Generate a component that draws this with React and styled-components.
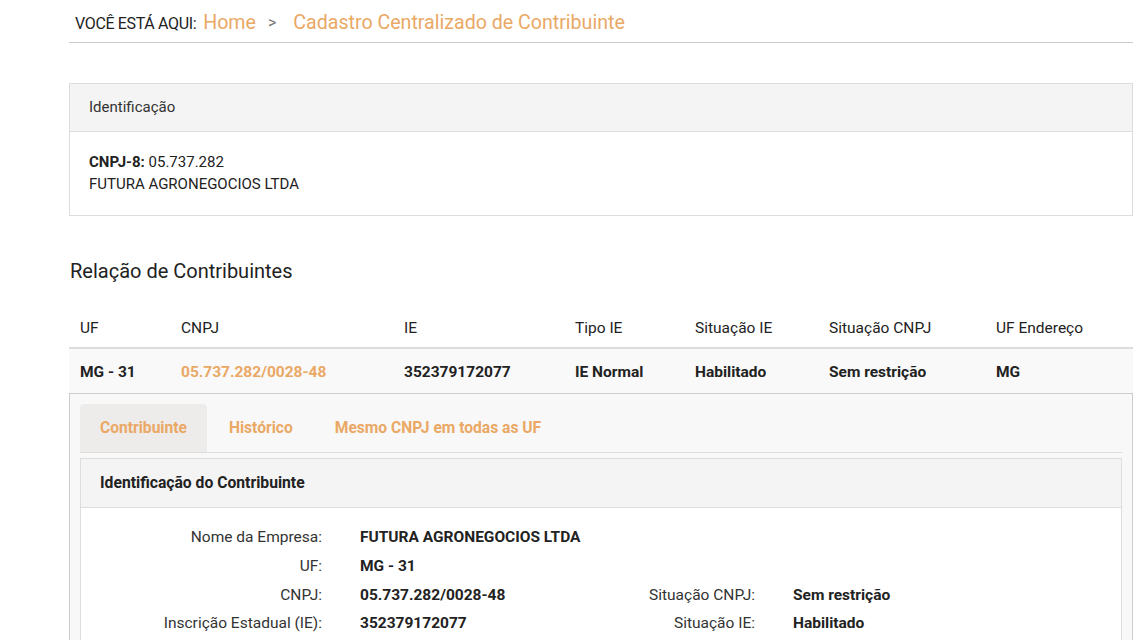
import React from "react";
import styled, { createGlobalStyle } from "styled-components";

const Global = createGlobalStyle`
  html, body { margin: 0; padding: 0; background: #fff; }
  body { font-family: Roboto, "Liberation Sans", Arial, sans-serif; color: #333; font-size: 15px; }
  * { box-sizing: border-box; }
`;

const ORANGE = "#eaa865";

const Page = styled.div`
  width: 1064px;
  margin-left: 69px;
`;

const Breadcrumb = styled.nav`
  height: 43px;
  border-bottom: 1px solid #cccccc;
  display: flex;
  align-items: center;
  padding-left: 6px;
  padding-top: 3px;
  gap: 7px;
`;

const Here = styled.span`
  font-size: 16px;
  letter-spacing: -0.35px;
  color: #222;
  margin-top: 1px;
`;

const Crumb = styled.span`
  font-size: 19.6px;
  color: ${ORANGE};
`;

const Sep = styled.span`
  font-size: 16px;
  color: #777;
  margin: 0 10px 0 5px;
`;

const Card = styled.section`
  margin-top: 40px;
  border: 1px solid #dddddd;
  background: #fff;
`;

const CardHeader = styled.div`
  height: 48px;
  line-height: 47px;
  padding: 0 19px;
  background: #f4f4f4;
  border-bottom: 1px solid #dddddd;
  font-size: 15px;
  color: #333;
`;

const CardBody = styled.div`
  padding: 19px 19px 20px;
  font-size: 15px;
  line-height: 22px;
  color: #222;
`;

const SectionTitle = styled.h2`
  margin: 41px 0 0 1px;
  font-size: 20px;
  font-weight: 400;
  line-height: 28px;
  color: #222;
`;

const Table = styled.div`
  margin-top: 20px;
`;

const Row = styled.div`
  display: grid;
  grid-template-columns: 101px 223px 171px 120px 134px 167px 1fr;
  align-items: center;
  height: 44px;
  padding-top: ${(p) => (p.$head ? "3px" : "1px")};
  background: ${(p) => (p.$head ? "#fff" : "#f9f9f9")};
  border-bottom: ${(p) => (p.$head ? "2px solid #dddddd" : "none")};
`;

const Cell = styled.div`
  padding-left: 11px;
  font-size: 15.5px;
  font-weight: ${(p) => (p.$bold ? 700 : 400)};
  color: ${(p) => (p.$link ? ORANGE : "#222")};
  white-space: nowrap;
`;

const Expanded = styled.div`
  border: 1px solid #cccccc;
  border-bottom: none;
  background: #f8f8f8;
  padding: 10px 10px 0;
`;

const Tabs = styled.div`
  display: flex;
  gap: 2px;
  border-bottom: 1px solid #dddddd;
  height: 49px;
`;

const Tab = styled.div`
  padding: 0 20px;
  height: 48px;
  line-height: 48px;
  font-size: 15.6px;
  font-weight: 700;
  color: ${ORANGE};
  background: ${(p) => (p.$active ? "#eeebeb" : "transparent")};
  border-radius: 4px 4px 0 0;
`;

const Panel = styled.div`
  margin-top: 5px;
  border: 1px solid #dddddd;
  border-bottom: none;
  background: #fff;
`;

const PanelHeader = styled.div`
  height: 49px;
  line-height: 48px;
  padding: 0 19px;
  background: #f4f4f4;
  border-bottom: 1px solid #dddddd;
  font-size: 15.7px;
  font-weight: 700;
  color: #222;
`;

const PanelBody = styled.div`
  padding: 15px 0 20px;
`;

const DetailRow = styled.div`
  display: grid;
  grid-template-columns: 279px 154px 279px 1fr;
  height: 28.7px;
  align-items: center;
  font-size: 15.5px;
`;

const Label = styled.div`
  text-align: right;
  padding-right: 38px;
  color: #333;
  white-space: nowrap;
`;

const Value = styled.div`
  font-weight: 700;
  color: #222;
  white-space: nowrap;
`;

const columns = ["UF", "CNPJ", "IE", "Tipo IE", "Situação IE", "Situação CNPJ", "UF Endereço"];

const details = [
  ["Nome da Empresa:", "FUTURA AGRONEGOCIOS LTDA", "", ""],
  ["UF:", "MG - 31", "", ""],
  ["CNPJ:", "05.737.282/0028-48", "Situação CNPJ:", "Sem restrição"],
  ["Inscrição Estadual (IE):", "352379172077", "Situação IE:", "Habilitado"],
];

export default function App() {
  return (
    <>
      <Global />
      <Page>
        <Breadcrumb>
          <Here>VOCÊ ESTÁ AQUI:</Here>
          <Crumb>Home</Crumb>
          <Sep>&gt;</Sep>
          <Crumb>Cadastro Centralizado de Contribuinte</Crumb>
        </Breadcrumb>

        <Card>
          <CardHeader>Identificação</CardHeader>
          <CardBody>
            <div>
              <b>CNPJ-8:</b> 05.737.282
            </div>
            <div>FUTURA AGRONEGOCIOS LTDA</div>
          </CardBody>
        </Card>

        <SectionTitle>Relação de Contribuintes</SectionTitle>

        <Table>
          <Row $head>
            {columns.map((c) => (
              <Cell key={c}>{c}</Cell>
            ))}
          </Row>
          <Row>
            <Cell $bold>MG - 31</Cell>
            <Cell $bold $link>05.737.282/0028-48</Cell>
            <Cell $bold>352379172077</Cell>
            <Cell $bold>IE Normal</Cell>
            <Cell $bold>Habilitado</Cell>
            <Cell $bold>Sem restrição</Cell>
            <Cell $bold>MG</Cell>
          </Row>
          <Expanded>
            <Tabs>
              <Tab $active>Contribuinte</Tab>
              <Tab>Histórico</Tab>
              <Tab>Mesmo CNPJ em todas as UF</Tab>
            </Tabs>
            <Panel>
              <PanelHeader>Identificação do Contribuinte</PanelHeader>
              <PanelBody>
                {details.map((d, i) => (
                  <DetailRow key={i}>
                    <Label>{d[0]}</Label>
                    <Value>{d[1]}</Value>
                    <Label>{d[2]}</Label>
                    <Value>{d[3]}</Value>
                  </DetailRow>
                ))}
              </PanelBody>
            </Panel>
          </Expanded>
        </Table>
      </Page>
    </>
  );
}
